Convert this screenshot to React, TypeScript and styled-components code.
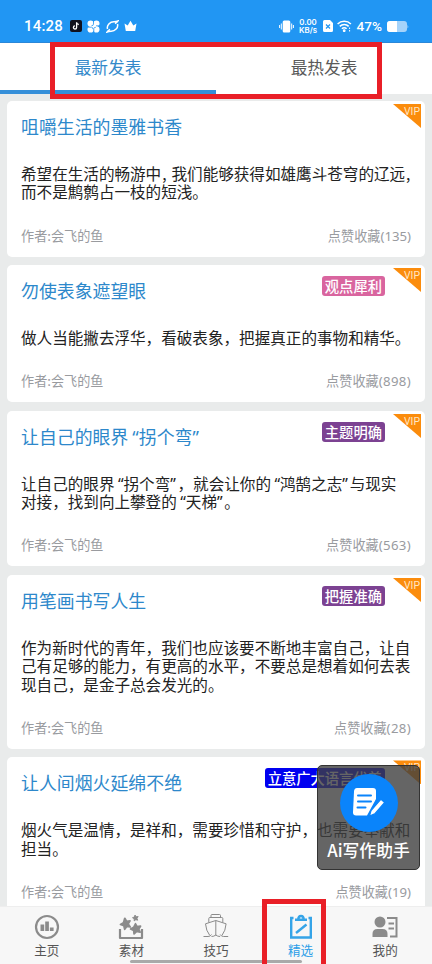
import React from 'react';
import styled, { createGlobalStyle } from 'styled-components';

const Global = createGlobalStyle`
  * { box-sizing: border-box; }
  body { margin: 0; background: #e9ebeb; font-family: Inter, 'Noto Sans CJK SC', sans-serif; }
`;

const Screen = styled.div`
  position: relative;
  display: flex;
  flex-direction: column;
  width: 432px;
  height: 964px;
  overflow: hidden;
  background: #e9ebeb;
  font-family: 'Noto Sans CJK SC', sans-serif;
`;

const StatusBar = styled.header`
  flex: none;
  display: flex;
  align-items: center;
  justify-content: space-between;
  height: 42px;
  padding: 10px 23px 0 24px;
  background: #2196f3;
  color: #fff;
`;

const StatusGroup = styled.div<{ $gap: number }>`
  display: flex;
  align-items: center;
  gap: ${(p) => p.$gap}px;
  svg { display: block; flex: none; }
`;

const Clock = styled.span`
  width: 39px;
  margin-right: 1px;
  font: 500 15px/20px Roboto, sans-serif;
  letter-spacing: 0.2px;
`;

const Speed = styled.span`
  width: 20px;
  font: 600 7.8px/8px Inter, sans-serif;
  text-align: center;
  white-space: nowrap;
`;

const Percent = styled.span`
  width: 26px;
  font: 500 13.6px/16px Roboto, sans-serif;
  white-space: nowrap;
`;

const Tabs = styled.nav`
  flex: none;
  display: flex;
  height: 52px;
  background: #fff;
  border-top: 1px solid #2a87d8;
`;

const Tab = styled.button<{ $active?: boolean }>`
  flex: 1;
  padding: 0;
  border: 0;
  border-bottom: 4px solid ${(p) => (p.$active ? '#358fd9' : '#fff')};
  background: none;
  color: ${(p) => (p.$active ? '#3489ca' : '#595959')};
  font: 400 16.7px/46px 'Noto Sans CJK SC', sans-serif;
`;

const List = styled.main`
  flex: 1;
  min-height: 0;
  overflow: hidden;
  display: flex;
  flex-direction: column;
  gap: 8.5px;
  padding: 7px 7px 0;
`;

const Card = styled.article`
  position: relative;
  flex: none;
  display: flex;
  flex-direction: column;
  padding: 12px 14px 10px;
  border-radius: 5px;
  background: #fff;
`;

const CardHead = styled.div`
  display: flex;
  align-items: flex-start;
  justify-content: space-between;
  height: 26px;
  padding-right: 26px;
`;

const Title = styled.h2`
  margin: 0;
  color: #2d88cb;
  font-size: 17.9px;
  font-weight: 400;
  line-height: 26px;
  white-space: nowrap;
`;

const Tag = styled.span<{ $color: string }>`
  height: 20px;
  margin-top: -1px;
  padding: 0 3px;
  border-radius: 3px;
  background: ${(p) => p.$color};
  color: #fff;
  font-size: 14.3px;
  font-weight: 500;
  line-height: 19px;
`;

const Body = styled.div`
  margin-top: 25px;
  color: #222;
  font-size: 15.58px;
  line-height: 18.3px;
  white-space: nowrap;
`;

const Line = styled.div`
  height: 18.3px;
`;

const Quote = styled.span<{ $open: boolean }>`
  display: inline-block;
  width: ${(p) => (p.$open ? 0.58 : 0.47)}em;
  font-family: 'Noto Sans', sans-serif;
  text-align: ${(p) => (p.$open ? 'right' : 'left')};
  line-height: 1;
`;

const HalfComma = styled.span`
  display: inline-block;
  width: 0.66em;
  padding-left: 0.06em;
  line-height: 1;
`;

const CardFoot = styled.div`
  display: flex;
  justify-content: space-between;
  height: 22px;
  margin-top: 24px;
  color: #999b9f;
  font-size: 13.15px;
  line-height: 22px;
`;

const Count = styled.span<{ $tracking: number }>`
  font-family: 'Noto Sans', sans-serif;
  font-size: 13.2px;
  line-height: 1;
  letter-spacing: ${(p) => p.$tracking}px;
`;

const Ribbon = styled.span`
  position: absolute;
  top: 3px;
  right: 4px;
  width: 28px;
  height: 24px;
  padding-right: 1px;
  background: #fb8c0c;
  clip-path: polygon(0 0, 100% 0, 100% 100%);
  color: #ffe6c4;
  font: 400 10.4px/15px Roboto, sans-serif;
  text-align: right;
`;

const BottomNav = styled.nav`
  flex: none;
  display: flex;
  height: 58px;
  padding: 7px 4.5px 0;
  background: #f7f7f7;
  border-top: 1px solid #eee;
`;

const NavItem = styled.button<{ $active?: boolean }>`
  flex: 1;
  display: flex;
  flex-direction: column;
  align-items: center;
  padding: 0;
  border: 0;
  background: none;
  color: ${(p) => (p.$active ? '#2b9ee8' : '#555')};
  font: 400 12.6px/20px 'Noto Sans CJK SC', sans-serif;
  svg { display: block; color: ${(p) => (p.$active ? '#35a4e8' : '#8b8b8b')}; }
`;

const HomeIndicator = styled.div`
  position: absolute;
  left: 130px;
  bottom: 1px;
  width: 172px;
  height: 3px;
  border-radius: 2px;
  background: #a9a9a9;
`;

const Assistant = styled.button`
  position: absolute;
  left: 317px;
  top: 765px;
  width: 103px;
  height: 105px;
  display: flex;
  flex-direction: column;
  align-items: center;
  padding: 8px 0 0;
  border: 1px solid #333;
  border-radius: 5px;
  background: rgba(62, 62, 62, 0.8);
  color: #fff;
  font: 500 16.8px/32px 'Noto Sans CJK SC', sans-serif;
  white-space: nowrap;
`;

const AssistantDisc = styled.span`
  display: flex;
  align-items: center;
  justify-content: center;
  width: 58px;
  height: 58px;
  margin-bottom: 2px;
  border-radius: 50%;
  background: #0a84fb;
`;

const Marker = styled.div<{ $x: number; $y: number; $w: number; $h: number }>`
  position: absolute;
  left: ${(p) => p.$x}px;
  top: ${(p) => p.$y}px;
  width: ${(p) => p.$w}px;
  height: ${(p) => p.$h}px;
  border: 5px solid #e91f27;
  pointer-events: none;
`;

type Entry = { title: string; lines: string[]; count: string; tag?: string; color?: string };

const entries: Entry[] = [
  { title: '咀嚼生活的墨雅书香', lines: ['希望在生活的畅游中,我们能够获得如雄鹰斗苍穹的辽远,', '而不是鹪鹩占一枝的短浅。'], count: '135' },
  { title: '勿使表象遮望眼', lines: ['做人当能撇去浮华，看破表象，把握真正的事物和精华。'], count: '898', tag: '观点犀利', color: '#d9659f' },
  { title: '让自己的眼界“拐个弯”', lines: ['让自己的眼界“拐个弯”，就会让你的“鸿鹄之志”与现实', '对接，找到向上攀登的“天梯”。'], count: '563', tag: '主题明确', color: '#7c4292' },
  { title: '用笔画书写人生', lines: ['作为新时代的青年，我们也应该要不断地丰富自己，让自', '己有足够的能力，有更高的水平，不要总是想着如何去表', '现自己，是金子总会发光的。'], count: '28', tag: '把握准确', color: '#7c4292' },
  { title: '让人间烟火延绵不绝', lines: ['烟火气是温情，是祥和，需要珍惜和守护，也需要奉献和', '担当。'], count: '19', tag: '立意广大语言优美', color: '#0000f0' },
];

const Prose = ({ text }: { text: string }) => (
  <>
    {text.split(/([“”,])/).map((part, i) => {
      if (part === '“' || part === '”') return <Quote key={i} $open={part === '“'}>{part}</Quote>;
      if (part === ',') return <HalfComma key={i}>{part}</HalfComma>;
      return part;
    })}
  </>
);

const EntryCard = ({ entry }: { entry: Entry }) => (
  <Card>
    <CardHead>
      <Title><Prose text={entry.title} /></Title>
      {entry.tag && <Tag $color={entry.color!}>{entry.tag}</Tag>}
    </CardHead>
    <Body>
      {entry.lines.map((line) => <Line key={line}><Prose text={line} /></Line>)}
    </Body>
    <CardFoot>
      <span>作者:会飞的鱼</span>
      <span>点赞收藏<Count $tracking={entry.count.includes('1') ? 0 : 0.35}>({entry.count})</Count></span>
    </CardFoot>
    <Ribbon>VIP</Ribbon>
  </Card>
);

const StatusIcons = () => (
  <>
    <svg width="12" height="12" viewBox="0 0 12 12">
      <rect width="12" height="12" rx="2" fill="#10101c" />
      <path d="M6.6 2.3v5.1a1.6 1.6 0 1 1-1.6-1.6M6.6 2.5c.2 1.2 1 1.9 2.2 2" fill="none" stroke="#fff" strokeWidth="1.3" />
    </svg>
    <svg width="13" height="13" viewBox="0 0 13 13" fill="#fff">
      <circle cx="3.6" cy="3.6" r="3.1" /><circle cx="9.4" cy="3.6" r="3.1" />
      <circle cx="3.6" cy="9.4" r="3.1" /><circle cx="9.4" cy="9.4" r="3.1" />
      <path d="M3 3h7v7H3z" />
      <path d="M6.5 1v3.2q0 1.5-2 1.5M1 7.2h3.4q1.6 0 1.6 2M6.8 12V8.6q0-1.3 2-1.3M12 5.8H9" fill="none" stroke="#2196f3" strokeWidth=".8" />
    </svg>
    <svg width="13" height="13" viewBox="0 0 13 13" fill="none" stroke="#fff">
      <path d="M1.500 9C.5 5 4 1.800 7.800 1.800c1.600 0 2.700 0 4.200-.8-.7 1.300-1.500 1.900-3 2.700M11.500 4c1 4-2.500 7.200-6.300 7.200-1.600 0-2.700 0-4.200.8.7-1.300 1.500-1.900 3-2.700" strokeWidth="1.500" />
    </svg>
    <svg width="13" height="12" viewBox="0 0 13 12" fill="#fff">
      <path d="M.5 3.500 3.700 5.500 6.500.8 9.300 5.500l3.200-2-1.300 7.500H1.800z" />
    </svg>
  </>
);

const VibrateIcon = () => (
  <svg width="15" height="13" viewBox="0 0 15 13" fill="#fff">
    <rect x="3.700" y=".5" width="7.600" height="12" rx="1.500" />
    <path d="M2.300 3.500v6M12.700 3.500v6M.6 5v3M14.400 5v3" stroke="#fff" strokeWidth="1" />
  </svg>
);

const SimIcon = () => (
  <svg width="10" height="12" viewBox="0 0 10 12">
    <path d="M1.500 0H7l3 3v7.500A1.500 1.500 0 0 1 8.500 12h-7A1.500 1.500 0 0 1 0 10.500v-9A1.500 1.500 0 0 1 1.500 0z" fill="#fff" />
    <path d="m3 4.500 4 4m0-4-4 4" stroke="#2196f3" strokeWidth="1.200" />
  </svg>
);

const WifiIcon = () => (
  <svg width="15" height="12" viewBox="0 0 15 12" fill="none" stroke="#fff" strokeWidth="1.600">
    <path d="M.6 4a9.500 9.500 0 0 1 13.300 0M2.800 6.400a6.300 6.300 0 0 1 8.900 0M4.900 8.700a3.300 3.300 0 0 1 4.700 0" />
    <circle cx="7.200" cy="10.700" r=".6" fill="#fff" />
    <path d="M12.600 7.500v4" strokeWidth="1" strokeDasharray="1.500 1" />
  </svg>
);

const BatteryIcon = () => (
  <svg width="22" height="11" viewBox="0 0 22 11">
    <rect width="20" height="11" rx="3" fill="#a5d3fa" />
    <path d="M3 0h7v11H3a3 3 0 0 1-3-3V3a3 3 0 0 1 3-3z" fill="#fff" />
    <path d="M20.500 3.500q1.500 2 0 4z" fill="#a5d3fa" />
  </svg>
);

const HomeIcon = () => (
  <svg width="26" height="26" viewBox="0 0 26 26" fill="currentColor">
    <circle cx="13" cy="13" r="11" fill="none" stroke="currentColor" strokeWidth="2.200" />
    <path d="M6.500 10.500h3.700V17H6.500zM11.200 7.500h3.700V17h-3.700zM15.900 13.500h3.700V17h-3.700z" />
  </svg>
);

const MaterialIcon = () => (
  <svg width="26" height="26" viewBox="0 0 26 26" fill="currentColor" stroke="currentColor" strokeLinejoin="round">
    <path d="M2 15v9h22v-9" fill="none" strokeWidth="2.200" />
    <path d="m6.800 4.300 1.700 3 3.500-.4-1.800 3 2 3-3.500-.5-2 2.800-.8-3.500-3.400-1.200 3-1.800zM17.500 9.800l1.500 2.800 3.500-.4-1.800 2.900 1.400 3-3.400-.7-2.600 2.400-.4-3.400-3.100-1.400 3.100-1.600z" strokeWidth="1.800" />
    <path d="m17 1 1.100 1.700 2.100-.1-1.200 1.700.7 1.900-1.900-.5-1.600 1.200V4.800l-1.700-1.100 1.900-.7z" strokeWidth=".9" />
  </svg>
);

const SkillIcon = () => (
  <svg width="26" height="26" viewBox="0 0 26 26" fill="none" stroke="currentColor" strokeWidth="1">
    <path d="M8 3.500V1.500q0-1 1-1h7.500q1 0 1 1v2M5.800 8.500v-4q0-1 1-1h12q1 0 1 1v4M12.800 6.500 2.500 9.800q.5 7 4.200 11.500M12.800 6.500l10.300 3.300q-.5 7-4.100 11.500M12.800 6.500v15M.5 22.500H5q2.500 0 3.500-2M25.200 22.500h-4.500q-2.500 0-3.500-2M8.500 22.500q2.500 0 4.300-1.500 1.800 1.500 4.300 1.500" />
  </svg>
);

const PickIcon = () => (
  <svg width="26" height="26" viewBox="0 0 26 26" fill="none" stroke="currentColor" strokeWidth="2.400">
    <path d="M5.500 4H3.200v19.500h19.600V4h-2.300" />
    <path d="M7 5.800h12M10.300 5.500q0-3.500 2.700-3.500t2.700 3.500" />
    <path d="m8 19 10.500-8.500" />
  </svg>
);

const MineIcon = () => (
  <svg width="26" height="26" viewBox="0 0 26 26" fill="currentColor">
    <circle cx="8" cy="8" r="5.500" />
    <path d="M.500 23v-3q0-5 5-5h5q5 0 5 5v3z" />
    <path d="M15 4h9.500v18.500H18M16.500 9.500H22M16.500 14.500H22" fill="none" stroke="currentColor" strokeWidth="2" />
  </svg>
);

const WriteIcon = () => (
  <svg width="34" height="30" viewBox="0 0 34 30">
    <path d="M5 0h16q3 0 3 3v8l-9 16.500H4q-3 0-3-3l1-21Q2.200 0 5 0z" fill="#fff" />
    <path d="M6 7.500h13M6 13.500h13M5.500 19.500h8" stroke="#0a84fb" strokeWidth="2" strokeLinecap="round" />
    <path d="m17.500 28 1.500-5.500L29 11.200l3.700 3.300-10 11.400z" fill="#fff" stroke="#0a84fb" strokeWidth="1.200" />
  </svg>
);

export default function App() {
  return (
    <Screen>
      <Global />
      <StatusBar>
        <StatusGroup $gap={5.5}><Clock>14:28</Clock><StatusIcons /></StatusGroup>
        <StatusGroup $gap={4.5}>
          <VibrateIcon /><Speed>0.00<br />KB/s</Speed><SimIcon /><WifiIcon /><Percent>47%</Percent><BatteryIcon />
        </StatusGroup>
      </StatusBar>
      <Tabs><Tab $active>最新发表</Tab><Tab>最热发表</Tab></Tabs>
      <List>{entries.map((e) => <EntryCard key={e.title} entry={e} />)}</List>
      <BottomNav>
        <NavItem><HomeIcon />主页</NavItem>
        <NavItem><MaterialIcon />素材</NavItem>
        <NavItem><SkillIcon />技巧</NavItem>
        <NavItem $active><PickIcon />精选</NavItem>
        <NavItem><MineIcon />我的</NavItem>
      </BottomNav>
      <HomeIndicator />
      <Assistant><AssistantDisc><WriteIcon /></AssistantDisc>Ai写作助手</Assistant>
      <Marker $x={50} $y={42} $w={332} $h={57} />
      <Marker $x={262} $y={899} $w={64} $h={80} />
    </Screen>
  );
}
